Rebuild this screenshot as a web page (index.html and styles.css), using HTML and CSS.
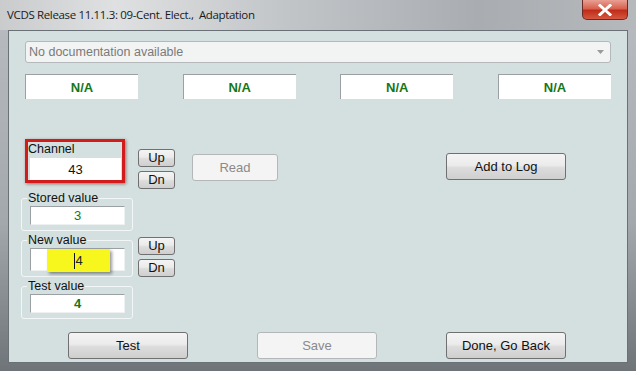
FILE: index.html
```html
<!DOCTYPE html>
<html lang="en">

<head>
    <meta charset="UTF-8">
    <title>VCDS Adaptation</title>
    <link rel="stylesheet" href="styles.css">
</head>

<body>
    <div class="window">
        <div class="titlebar">
            <span class="title">VCDS Release 11.11.3: 09-Cent. Elect.,&nbsp; Adaptation</span>
            <div class="close">
                <svg width="16" height="12" viewBox="0 0 16 12">
                    <path d="M3 1.5 L13 10.5 M13 1.5 L3 10.5" stroke="#fff" stroke-width="3" stroke-linecap="square" />
                </svg>
            </div>
        </div>
        <div class="frame">
            <div class="client">
                <div class="combo">
                    <span>No documentation available</span>
                    <svg class="arrow" width="7" height="4" viewBox="0 0 7 4">
                        <path d="M0 0 L7 0 L3.5 4 Z" fill="#9a9a9a" />
                    </svg>
                </div>

                <div class="na-row">
                    <div class="na">N/A</div>
                    <div class="na">N/A</div>
                    <div class="na">N/A</div>
                    <div class="na">N/A</div>
                </div>

                <div class="middle">
                    <!-- channel row -->
                    <div class="row row-channel">
                        <div class="channel">
                            <div class="channel-label">Channel</div>
                            <div class="edit edit-channel">43</div>
                        </div>
                        <div class="updn">
                            <button class="btn small">Up</button>
                            <button class="btn small">Dn</button>
                        </div>
                        <button class="btn wide read" disabled>Read</button>
                        <button class="btn wide addlog">Add to Log</button>
                    </div>

                    <div class="row">
                        <fieldset class="group">
                            <legend>Stored value</legend>
                            <div class="edit green">3</div>
                        </fieldset>
                    </div>

                    <div class="row">
                        <fieldset class="group group-new">
                            <legend>New value</legend>
                            <div class="edit edit-new">
                                <div class="highlight"><span class="caret"></span>4</div>
                            </div>
                        </fieldset>
                        <div class="updn updn-new">
                            <button class="btn small">Up</button>
                            <button class="btn small">Dn</button>
                        </div>
                    </div>

                    <div class="row">
                        <fieldset class="group">
                            <legend>Test value</legend>
                            <div class="edit green bold">4</div>
                        </fieldset>
                    </div>
                </div>

                <div class="bottom">
                    <button class="btn wide">Test</button>
                    <button class="btn wide" disabled>Save</button>
                    <button class="btn wide">Done, Go Back</button>
                </div>
            </div>
        </div>
    </div>
</body>

</html>
```

FILE: styles.css
```css
* {
    box-sizing: border-box;
}

body {
    margin: 0;
    font-family: "Liberation Sans", Arial, sans-serif;
    font-size: 12px;
    color: #111;
    background: #6b7075;
}

.window {
    width: 636px;
    height: 371px;
    display: flex;
    flex-direction: column;
    background: linear-gradient(to bottom, #b9bdc1, #a3a8ac 60%, #6f7478);
    overflow: hidden;
}

/* title bar */
.titlebar {
    height: 30px;
    display: flex;
    align-items: flex-start;
    justify-content: space-between;
    background: linear-gradient(to right, #c9cbcd 0%, #dfe0e1 18%, #c2c5c8 45%, #a9adb1 75%, #b5b9bc 100%);
}

.title {
    font-family: "Open Sans", "Liberation Sans", sans-serif;
    font-size: 11.5px;
    letter-spacing: -0.35px;
    color: #1a1a1a;
    padding: 7px 0 0 7px;
}

.close {
    width: 46px;
    height: 20px;
    margin-right: 8px;
    border: 1px solid #6b2b24;
    border-top: none;
    border-radius: 0 0 5px 5px;
    background: linear-gradient(to bottom, #e8a093 0%, #d9614f 45%, #bf2d1a 55%, #d6573f 100%);
    display: flex;
    align-items: center;
    justify-content: center;
}

/* frame around client */
.frame {
    flex: 1;
    padding: 0 8px 8px 8px;
}

.client {
    height: 100%;
    background: #d3e0df;
    border: 1px solid #6a7176;
    padding: 10px 16px 0 16px;
}

.combo {
    height: 22px;
    border: 1px solid #b4b8ba;
    border-radius: 3px;
    background: #f2f3f3;
    color: #7a7a7a;
    font-size: 12.5px;
    display: flex;
    align-items: center;
    justify-content: space-between;
    padding: 0 6px 0 3px;
}

.na-row {
    display: flex;
    justify-content: space-between;
    margin-top: 11px;
}

.na {
    width: 113px;
    height: 25px;
    background: #fff;
    border-top: 1px solid #9aa0a3;
    border-left: 1px solid #9aa0a3;
    color: #15761a;
    font-weight: bold;
    font-size: 13px;
    display: flex;
    align-items: center;
    justify-content: center;
}

/* middle area */
.middle {
    margin: 40px 0 0 -4px;
    display: flex;
    flex-direction: column;
}

.row {
    display: flex;
    align-items: flex-start;
}

.row + .row {
    margin-top: 2px;
}

.channel {
    margin-left: 4px;
    width: 100px;
    height: 44px;
    border: 3px solid #d21c1c;
    box-shadow: 1px 1px 3px rgba(90, 20, 20, 0.55);
    background: #d3e0df;
}

.channel-label {
    height: 16px;
    line-height: 14px;
    font-size: 12.5px;
}

.edit {
    background: #fff;
    border-top: 1px solid #9aa0a3;
    border-left: 1px solid #9aa0a3;
    border-bottom: 1px solid #eef1f1;
    border-right: 1px solid #eef1f1;
    height: 19px;
    width: 95px;
    display: flex;
    align-items: center;
    justify-content: center;
    font-size: 13px;
}

.edit-channel {
    margin-left: 2px;
    width: 91px;
    height: 22px;
    border: none;
}

.green {
    color: #15761a;
}

.bold {
    font-weight: bold;
}

.updn {
    margin: 10px 0 0 13px;
    display: flex;
    flex-direction: column;
    gap: 4px;
}

.updn-new {
    margin: 4px 0 0 5px;
}

/* buttons */
.btn {
    font-family: "Liberation Sans", Arial, sans-serif;
    font-size: 13px;
    color: #111;
    border: 1px solid #707070;
    border-radius: 3px;
    background: linear-gradient(to bottom, #f4f4f4 0%, #ebebeb 45%, #dcdcdc 55%, #cfcfcf 100%);
    padding: 0;
    height: 27px;
}

.btn:disabled {
    color: #8a8a8a;
    border-color: #b3b7b9;
    background: #f4f4f4;
}

.btn.small {
    width: 37px;
    height: 18px;
    font-size: 13px;
    line-height: 16px;
}

.btn.wide {
    width: 120px;
}

.read {
    width: 86px !important;
    margin: 15px 0 0 17px;
}

.addlog {
    margin: 14px 0 0 168px;
}

/* group boxes */
.group {
    margin: 0;
    width: 112px;
    border: 1px solid #f3f6f6;
    border-radius: 3px;
    padding: 0 0 5px 8px;
}

.group legend {
    padding: 0 1px;
    margin-left: -3px;
    line-height: 14px;
    font-size: 12.5px;
}

.group .edit {
    margin-top: 1px;
}

.group-new .edit {
    height: 23px;
}

.edit-new {
    position: relative;
}

.highlight {
    position: absolute;
    left: 16px;
    top: 0;
    width: 63px;
    height: 23px;
    background: #f7f71e;
    box-shadow: 2px 2px 3px rgba(0, 0, 0, 0.4);
    display: flex;
    align-items: center;
    justify-content: center;
    color: #222;
    font-size: 13px;
}

.caret {
    width: 1px;
    height: 16px;
    background: #111;
}

.bottom {
    display: flex;
    margin: 13px 0 0 43px;
    gap: 69px;
}
```
